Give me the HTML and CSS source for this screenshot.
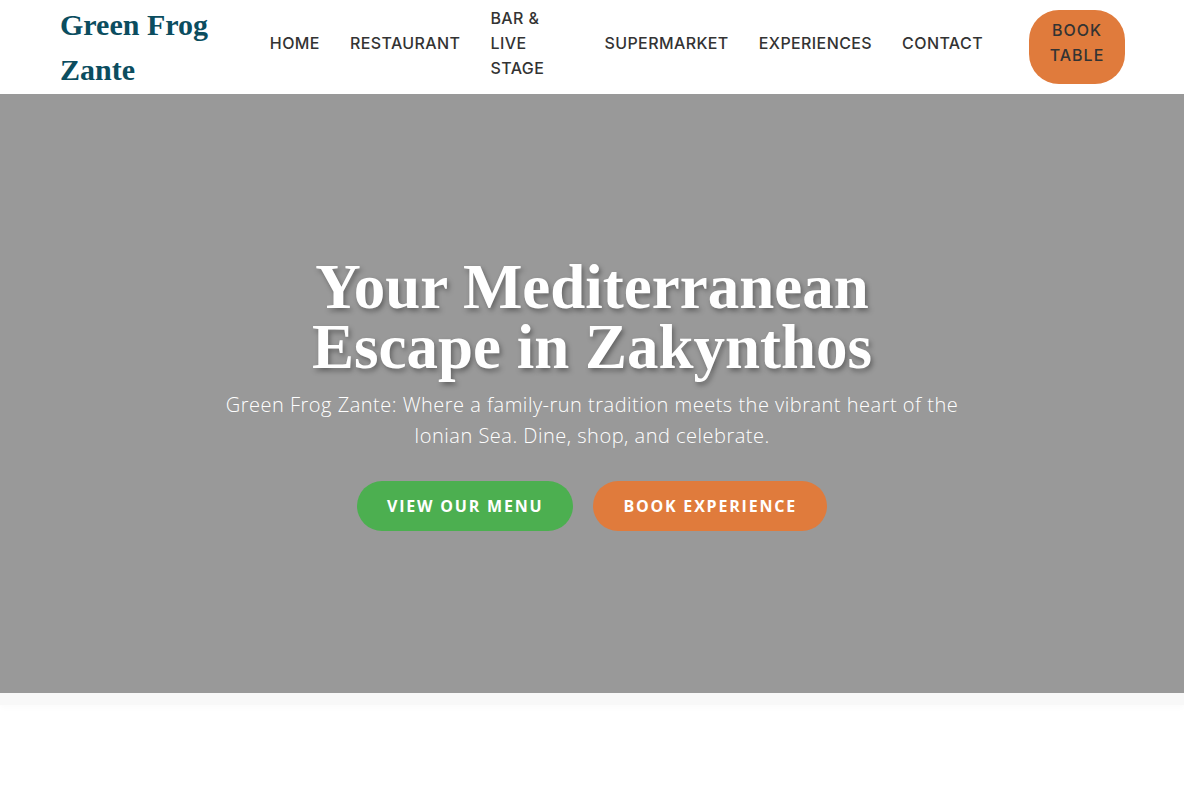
FILE: index.html
```html
<!DOCTYPE html>
<html lang="en">
<head>
<meta charset="utf-8">
<title>Green Frog Zante</title>
<link rel="stylesheet" href="styles.css">
</head>
<body>
<header class="site-header">
  <div class="header-inner">
    <a class="logo" href="#">Green Frog Zante</a>
    <nav class="main-nav">
      <ul class="nav-list">
        <li><a href="#">HOME</a></li>
        <li><a href="#">RESTAURANT</a></li>
        <li class="nav-narrow"><a href="#">BAR &amp; LIVE STAGE</a></li>
        <li><a href="#">SUPERMARKET</a></li>
        <li><a href="#">EXPERIENCES</a></li>
        <li><a href="#">CONTACT</a></li>
      </ul>
    </nav>
    <a class="btn-book" href="#">BOOK TABLE</a>
  </div>
</header>
<main>
  <section class="hero">
    <div class="hero-content">
      <h1 class="hero-title">Your Mediterranean<br>Escape in Zakynthos</h1>
      <p class="hero-text">Green Frog Zante: Where a family-run tradition meets the vibrant heart of the Ionian Sea. Dine, shop, and celebrate.</p>
      <div class="hero-actions">
        <a class="btn btn-green" href="#">VIEW OUR MENU</a>
        <a class="btn btn-orange" href="#">BOOK EXPERIENCE</a>
      </div>
    </div>
  </section>
  <section class="next-section">
    <div class="next-strip"></div>
  </section>
</main>
</body>
</html>
```
FILE: styles.css
```css
* { box-sizing: border-box; }
html { margin: 0; padding: 0; background: #fff; }
body {
  margin: 0 16px 0 0;
  padding: 0;
  font-family: "Open Sans", "Noto Sans", Arial, sans-serif;
  color: #333;
  background: #fff;
}
a { text-decoration: none; }

.site-header {
  background: #fff;
  height: 94px;
  position: relative;
  z-index: 2;
}
.header-inner {
  height: 94px;
  padding: 0 59px 0 60px;
  display: flex;
  align-items: center;
}
.logo {
  font-family: "Liberation Serif", "Times New Roman", serif;
  font-weight: 700;
  font-size: 30px;
  line-height: 45px;
  color: #0b4d5f;
  width: 160px;
  flex: 0 0 auto;
}
.main-nav {
  margin-left: auto;
  padding-bottom: 8px;
}
.nav-list {
  list-style: none;
  margin: 0;
  padding: 0;
  display: flex;
  align-items: center;
  gap: 30px;
}
.nav-list a {
  display: block;
  color: #333;
  font-family: Inter, "Open Sans", Arial, sans-serif;
  font-size: 16px;
  font-weight: 500;
  letter-spacing: 0.4px;
  line-height: 25px;
}
.nav-narrow { width: 84px; }
.btn-book {
  margin-left: 46px;
  width: 96px;
  height: 74px;
  border-radius: 30px;
  background: #e07b3c;
  color: #333;
  font-family: Inter, "Open Sans", Arial, sans-serif;
  font-size: 16px;
  font-weight: 500;
  letter-spacing: 1px;
  line-height: 25px;
  text-align: center;
  display: flex;
  align-items: center;
  justify-content: center;
  padding: 0 12px 9px;
}

.hero {
  height: 599px;
  background: #999;
  display: flex;
  align-items: center;
  justify-content: center;
  text-align: center;
}
.hero-content { max-width: 800px; }
.hero-title {
  margin: 0 0 12px;
  font-family: "Liberation Serif", "Times New Roman", serif;
  font-weight: 700;
  font-size: 63px;
  line-height: 60px;
  color: #fff;
  text-shadow: 2px 3px 5px rgba(0,0,0,0.35);
}
.hero-text {
  max-width: 750px;
  margin: 0 auto 30px;
  font-size: 20px;
  font-weight: 300;
  line-height: 31px;
  color: #fff;
  letter-spacing: 0.5px;
}
.hero-actions {
  display: flex;
  justify-content: center;
  gap: 20px;
}
.btn {
  display: inline-block;
  height: 50px;
  line-height: 50px;
  padding: 0 30px;
  border-radius: 25px;
  color: #fff;
  font-size: 16px;
  font-weight: 700;
  letter-spacing: 1.8px;
}
.btn-green { background: #4caf50; }
.btn-orange { background: #e07b3c; }

.next-section {
  height: 400px;
  background: #fff;
}
.next-strip {
  height: 12px;
  background: #f8f8f8;
  box-shadow: 0 3px 6px rgba(0,0,0,0.02);
}
```
